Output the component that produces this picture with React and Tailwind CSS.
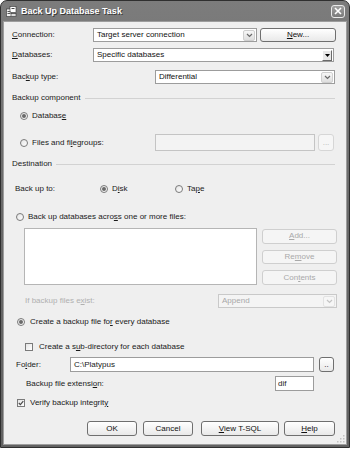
import React from "react";

const F = { fontFamily: '"Liberation Sans", Arial, sans-serif' };

function Chevron({ color = "#6b6b6b" }) {
  return (
    <svg width="7" height="5" viewBox="0 0 7 5">
      <path d="M1 1 L3.5 3.5 L6 1" fill="none" stroke={color} strokeWidth="1.2" />
    </svg>
  );
}

function XpCombo({ text, w, disabled }) {
  return (
    <div
      className={`flex h-full items-center border ${disabled ? "border-[#c9c9c9] bg-[#f4f4f4] text-[#a8a8a8]" : "border-[#9c9c9c] bg-white text-[#111]"}`}
      style={{ width: w }}
    >
      <span className="flex-1 pl-[3px] leading-none">{text}</span>
      <div
        className={`mr-[1px] flex h-[11px] w-[12px] items-center justify-center rounded-[2px] border ${disabled ? "border-[#e2e2e2] bg-[#f6f6f6]" : "border-[#cfcfcf] bg-gradient-to-b from-[#f7f7f7] to-[#dedede]"}`}
      >
        <Chevron color={disabled ? "#c4c4c4" : "#6b6b6b"} />
      </div>
    </div>
  );
}

function ClassicCombo({ text, w }) {
  return (
    <div className="flex h-full items-center border border-[#9c9c9c] bg-white text-[#111]" style={{ width: w }}>
      <span className="flex-1 pl-[3px] leading-none">{text}</span>
      <div className="mr-[1px] flex h-[11px] w-[10px] items-center justify-center border-b border-r border-[#6a6a6a] border-t-[#fff] border-l-[#fff] border-t border-l bg-[#e8e8e8]">
        <svg width="5" height="3" viewBox="0 0 5 3">
          <path d="M0 0 L5 0 L2.5 3 Z" fill="#000" />
        </svg>
      </div>
    </div>
  );
}

function Btn({ children, w, disabled, h = "h-full" }) {
  return (
    <div
      className={`flex ${h} items-center justify-center rounded-[3px] border leading-none ${disabled ? "border-[#cfcfcf] bg-[#f5f5f5] text-[#a9a9a9]" : "border-[#6f6f6f] bg-gradient-to-b from-[#ffffff] to-[#e9e9e9] text-[#111]"}`}
      style={{ width: w }}
    >
      {children}
    </div>
  );
}

function Radio({ checked }) {
  return (
    <div className="flex h-[8px] w-[8px] shrink-0 items-center justify-center rounded-full border border-[#7a7a7a] bg-gradient-to-br from-[#e4e4e4] to-white">
      {checked && <div className="h-[4px] w-[4px] rounded-full bg-[#6a6a6a]" />}
    </div>
  );
}

function Check({ checked }) {
  return (
    <div className="flex h-[8px] w-[8px] shrink-0 items-center justify-center border border-[#7a7a7a] bg-gradient-to-br from-[#e4e4e4] to-white">
      {checked && (
        <svg width="6" height="6" viewBox="0 0 6 6">
          <path d="M0.8 3 L2.4 4.6 L5.3 1.2" fill="none" stroke="#4a4a4a" strokeWidth="1.2" />
        </svg>
      )}
    </div>
  );
}

function Header({ text }) {
  return (
    <div className="ml-[8px] mr-[11px] flex h-[10px] items-center gap-[4px] text-[#222]">
      <span className="leading-none">{text}</span>
      <div className="h-px flex-1 bg-[#d2d2d2]" />
    </div>
  );
}

export default function App() {
  return (
    <div className="h-[451px] w-[350px] bg-white text-[8px]" style={F}>
      <div className="flex h-[448px] w-[350px] flex-col rounded-t-[7px] border border-[#2f2f2f] bg-gradient-to-b from-[#7c7c7c] via-[#686868] to-[#626262]">
        {/* Title bar */}
        <div className="flex h-[20px] shrink-0 items-center pl-[5px] pr-[4px]">
          <svg width="11" height="11" viewBox="0 0 11 11" className="mr-[4px]">
            <rect x="0.5" y="3" width="5" height="7.5" fill="#f2f2f2" stroke="#333" strokeWidth="0.6" />
            <rect x="4" y="0.5" width="6" height="6" fill="#fff" stroke="#333" strokeWidth="0.6" />
            <rect x="5.5" y="2" width="3" height="1" fill="#444" />
            <rect x="1.5" y="5" width="3" height="1" fill="#555" />
            <rect x="1.5" y="7" width="3" height="1" fill="#555" />
            <rect x="5" y="7.5" width="5" height="3" fill="#dcdcdc" stroke="#333" strokeWidth="0.6" />
          </svg>
          <span className="flex-1 pt-[1px] text-[9px] font-bold leading-none text-white" style={{ textShadow: "1px 1px 0 #3a3a3a" }}>
            Back Up Database Task
          </span>
          <div className="flex h-[13px] w-[14px] items-center justify-center rounded-[3px] border border-[#eaeaea] bg-gradient-to-b from-[#a0a0a0] to-[#7a7a7a]">
            <svg width="8" height="8" viewBox="0 0 8 8">
              <path d="M1 1 L7 7 M7 1 L1 7" stroke="#fff" strokeWidth="1.6" />
            </svg>
          </div>
        </div>

        {/* Body */}
        <div className="mx-[2px] mb-[2px] flex flex-1 flex-col border border-[#9d9d9d] bg-[#efefef] text-[#1a1a1a]">
          <div className="relative flex flex-1 flex-col">
            {/* Connection */}
            <div className="ml-[8px] mt-[6px] flex h-[14px] items-center">
              <span className="w-[81px] leading-none"><u>C</u>onnection:</span>
              <XpCombo text="Target server connection" w={164} />
              <div className="ml-[3px] h-full">
                <Btn w={76}><u>N</u>ew...</Btn>
              </div>
            </div>
            {/* Databases */}
            <div className="ml-[8px] mt-[6px] flex h-[14px] items-center">
              <span className="w-[81px] leading-none"><u>D</u>atabases:</span>
              <ClassicCombo text="Specific databases" w={241} />
            </div>
            {/* Backup type */}
            <div className="ml-[8px] mt-[8px] flex h-[14px] items-center">
              <span className="w-[143px] leading-none">Bac<u>k</u>up type:</span>
              <XpCombo text="Differential" w={180} />
            </div>

            <div className="mt-[9px]">
              <Header text="Backup component" />
            </div>

            <div className="ml-[16px] mt-[7px] flex h-[12px] items-center gap-[4px]">
              <Radio checked />
              <span className="leading-none">Databas<u>e</u></span>
            </div>

            <div className="ml-[16px] mt-[12px] flex h-[17px] items-center">
              <div className="flex w-[135px] items-center gap-[4px]">
                <Radio />
                <span className="leading-none">Files and fi<u>l</u>egroups:</span>
              </div>
              <div className="h-full w-[160px] border border-[#c4c4c4] bg-[#f3f3f3]" />
              <div className="ml-[3px] flex h-full w-[16px] items-center justify-center rounded-[3px] border border-[#d6d6d6] bg-[#f6f6f6] text-[#b5b5b5] leading-none">
                ...
              </div>
            </div>

            <div className="mt-[8px]">
              <Header text="Destination" />
            </div>

            <div className="ml-[11px] mt-[14px] flex h-[12px] items-center">
              <span className="w-[85px] leading-none">Back up to:</span>
              <div className="flex w-[75px] items-center gap-[4px]">
                <Radio checked />
                <span className="leading-none">D<u>i</u>sk</span>
              </div>
              <div className="flex items-center gap-[4px]">
                <Radio />
                <span className="leading-none">Ta<u>p</u>e</span>
              </div>
            </div>

            <div className="ml-[12px] mt-[16px] flex h-[12px] items-center gap-[4px]">
              <Radio />
              <span className="leading-none">Back up databases acro<u>s</u>s one or more files:</span>
            </div>

            <div className="ml-[20px] mt-[5px] flex h-[57px]">
              <div className="h-full w-[233px] border border-[#b5b5b5] bg-white" />
              <div className="ml-[5px] mt-[1px] flex w-[75px] flex-col gap-[6px]">
                <Btn w={75} disabled h="h-[15px]"><u>A</u>dd...</Btn>
                <Btn w={75} disabled h="h-[15px]">Re<u>m</u>ove</Btn>
                <Btn w={75} disabled h="h-[15px]">Con<u>t</u>ents</Btn>
              </div>
            </div>

            <div className="ml-[21px] mt-[9px] flex h-[14px] items-center">
              <span className="w-[193px] leading-none text-[#b0b0b0]">If backup files e<u>x</u>ist:</span>
              <XpCombo text="Append" w={119} disabled />
            </div>

            <div className="ml-[13px] mt-[8px] flex h-[12px] items-center gap-[5px]">
              <Radio checked />
              <span className="leading-none">Create a backup file fo<u>r</u> every database</span>
            </div>

            <div className="ml-[21px] mt-[13px] flex h-[12px] items-center gap-[6px]">
              <Check />
              <span className="leading-none">Create a s<u>u</u>b-directory for each database</span>
            </div>

            <div className="ml-[12px] mt-[4px] flex h-[15px] items-center">
              <span className="w-[54px] leading-none">Fo<u>l</u>der:</span>
              <div className="flex h-full w-[244px] items-center border border-[#9c9c9c] bg-white pl-[3px] leading-none">
                C:\Platypus
              </div>
              <div className="ml-[5px] h-full">
                <Btn w={15}>..</Btn>
              </div>
            </div>

            <div className="ml-[22px] mt-[4px] flex h-[15px] items-center">
              <span className="w-[249px] leading-none">Backup file extensi<u>o</u>n:</span>
              <div className="flex h-full w-[39px] items-center border border-[#9c9c9c] bg-white pl-[2px] leading-none">
                dif
              </div>
            </div>

            <div className="ml-[13px] mt-[6px] flex h-[12px] items-center gap-[5px]">
              <Check checked />
              <span className="leading-none">Verify backup integrit<u>y</u></span>
            </div>

            <div className="ml-[83px] mt-[12px] flex h-[15px] items-center">
              <Btn w={50}>OK</Btn>
              <div className="ml-[6px] h-full"><Btn w={50}>Cancel</Btn></div>
              <div className="ml-[8px] h-full"><Btn w={78}><u>V</u>iew T-SQL</Btn></div>
              <div className="ml-[5px] h-full"><Btn w={51}><u>H</u>elp</Btn></div>
            </div>

            <svg width="9" height="9" viewBox="0 0 9 9" className="absolute bottom-[1px] right-[1px]">
              <g fill="#c2c2c2">
                <rect x="7" y="1" width="1.5" height="1.5" />
                <rect x="4" y="4" width="1.5" height="1.5" />
                <rect x="7" y="4" width="1.5" height="1.5" />
                <rect x="1" y="7" width="1.5" height="1.5" />
                <rect x="4" y="7" width="1.5" height="1.5" />
                <rect x="7" y="7" width="1.5" height="1.5" />
              </g>
            </svg>
          </div>
        </div>
      </div>
    </div>
  );
}
